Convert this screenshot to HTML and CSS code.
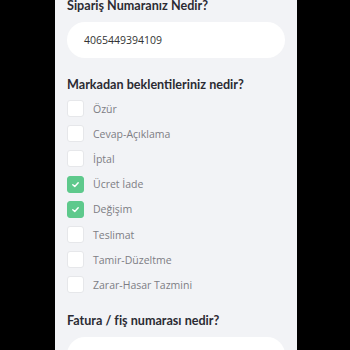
FILE: index.html
```html
<!DOCTYPE html>
<html lang="tr">
<head>
<meta charset="utf-8">
<link rel="stylesheet" href="styles.css">
</head>
<body>
<div class="panel">
  <div class="content">
    <h2 class="q">Sipariş Numaranız Nedir?</h2>
    <div class="field"><span class="val">4065449394109</span></div>

    <h2 class="q q-gap">Markadan beklentileriniz nedir?</h2>
    <ul class="opts">
      <li class="opt"><span class="box"></span><span class="lbl">Özür</span></li>
      <li class="opt"><span class="box"></span><span class="lbl">Cevap-Açıklama</span></li>
      <li class="opt"><span class="box"></span><span class="lbl">İptal</span></li>
      <li class="opt"><span class="box on"><svg viewBox="0 0 10 10" width="9" height="9"><path d="M2 5.2 L4.2 7.2 L8 3" fill="none" stroke="#fff" stroke-width="1.6" stroke-linecap="round" stroke-linejoin="round"/></svg></span><span class="lbl">Ücret İade</span></li>
      <li class="opt"><span class="box on"><svg viewBox="0 0 10 10" width="9" height="9"><path d="M2 5.2 L4.2 7.2 L8 3" fill="none" stroke="#fff" stroke-width="1.6" stroke-linecap="round" stroke-linejoin="round"/></svg></span><span class="lbl">Değişim</span></li>
      <li class="opt"><span class="box"></span><span class="lbl">Teslimat</span></li>
      <li class="opt"><span class="box"></span><span class="lbl">Tamir-Düzeltme</span></li>
      <li class="opt"><span class="box"></span><span class="lbl">Zarar-Hasar Tazmini</span></li>
    </ul>

    <h2 class="q q-gap2">Fatura / fiş numarası nedir?</h2>
    <div class="field"><span class="ph">0000000000000000</span></div>
  </div>
</div>
</body>
</html>
```
FILE: styles.css
```css
html, body {
  margin: 0;
  padding: 0;
  background: #000;
  height: 350px;
  overflow: hidden;
}
.panel {
  width: 242px;
  margin-left: 55px;
  height: 350px;
  background: #f2f3f6;
  overflow: hidden;
}
.content {
  padding: 0 12px;
  margin-top: -3px;
  font-family: "Open Sans", "DejaVu Sans", sans-serif;
}
.q {
  margin: 0;
  font-family: Lato, "Open Sans", sans-serif;
  font-size: 12.6px;
  line-height: 18px;
  font-weight: 700;
  color: #2b2b33;
}
.q-gap { margin-top: 18px; }
.q-gap2 { margin-top: 14px; }
.field {
  margin-top: 7px;
  height: 36px;
  border-radius: 18px;
  background: #fff;
  display: flex;
  align-items: center;
  padding-left: 17px;
  font-size: 10.5px;
  color: #333;
}
.ph { color: #b8b8bd; }
.opts {
  list-style: none;
  margin: 2px 0 0;
  padding: 0;
}
.opt {
  height: 25.2px;
  display: flex;
  align-items: center;
  gap: 9px;
}
.box {
  width: 17px;
  height: 17px;
  box-sizing: border-box;
  border: 1px solid #e6e7ea;
  border-radius: 3px;
  background: #fff;
  display: flex;
  align-items: center;
  justify-content: center;
}
.box.on {
  background: #5ec98c;
  border-color: #5ec98c;
}
.lbl {
  font-size: 10.5px;
  color: #7d7d84;
}
```
